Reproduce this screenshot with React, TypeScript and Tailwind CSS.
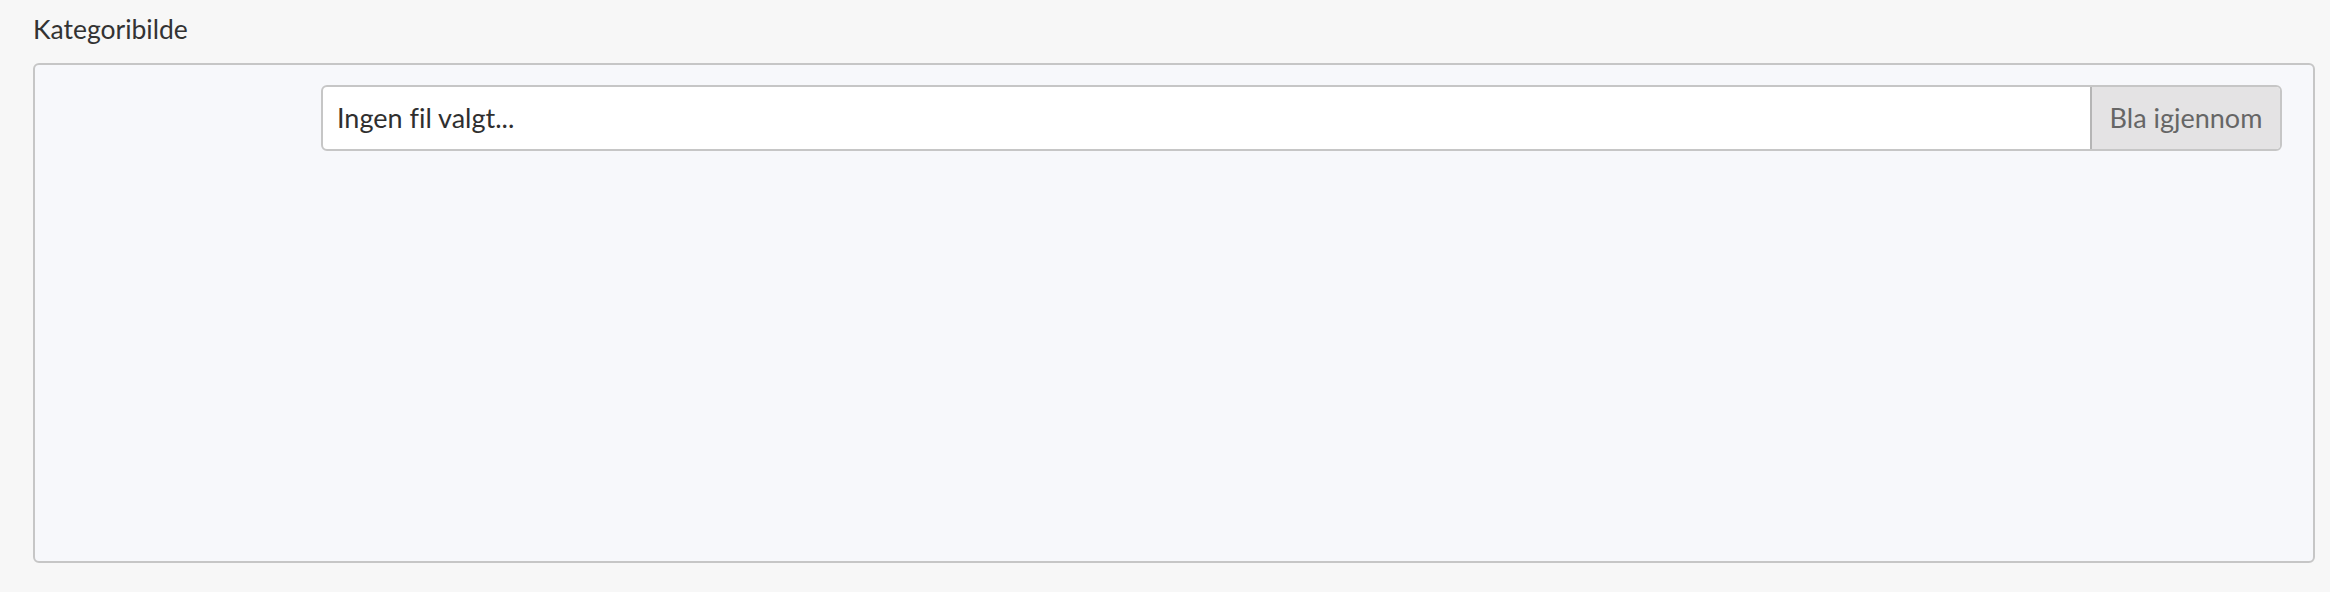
export default function App() {
  return (
    <div className="h-[592px] w-[2330px] bg-[#f7f7f7] pl-[33px] pr-[15px] pt-[9px] font-['Lato',sans-serif] [font-variant-ligatures:none]">
      <label className="block h-[54px] text-[26.5px] leading-[40px] text-[#333333]">Kategoribilde</label>
      <div className="flex h-[500px] rounded-[6px] border-2 border-[#c6c6c6] bg-[#f7f8fb] pl-[286px] pr-[31px] pt-[20px]">
        <div className="flex h-[66px] flex-1 overflow-hidden rounded-[6px] border-2 border-[#c6c6c6] bg-white">
          <div className="flex flex-1 items-center pl-[14px] text-[27px] text-[#2f2f2f]">Ingen fil valgt...</div>
          <button
            type="button"
            className="flex w-[190px] items-center justify-center border-l-2 border-[#b5b5b5] bg-[#e4e3e4] text-[27px] text-[#666666]"
          >
            Bla igjennom
          </button>
        </div>
      </div>
    </div>
  );
}
